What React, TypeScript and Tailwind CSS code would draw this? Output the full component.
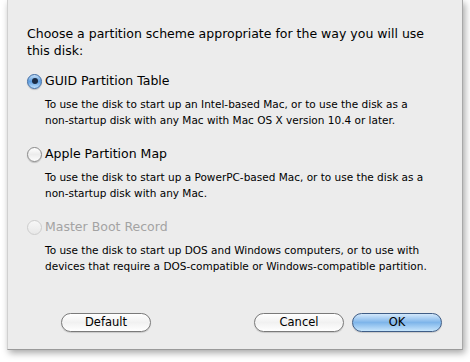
const FONT = { fontFamily: '"Lucida Grande", "DejaVu Sans", sans-serif' }

type Opt = {
  label: string
  desc: string[]
  state: 'on' | 'off' | 'disabled'
}

const OPTIONS: Opt[] = [
  {
    label: 'GUID Partition Table',
    desc: [
      'To use the disk to start up an Intel-based Mac, or to use the disk as a',
      'non-startup disk with any Mac with Mac OS X version 10.4 or later.',
    ],
    state: 'on',
  },
  {
    label: 'Apple Partition Map',
    desc: [
      'To use the disk to start up a PowerPC-based Mac, or to use the disk as a',
      'non-startup disk with any Mac.',
    ],
    state: 'off',
  },
  {
    label: 'Master Boot Record',
    desc: [
      'To use the disk to start up DOS and Windows computers, or to use with',
      'devices that require a DOS-compatible or Windows-compatible partition.',
    ],
    state: 'disabled',
  },
]

function Radio({ state }: { state: Opt['state'] }) {
  if (state === 'on') {
    return (
      <div className="w-[15px] h-[15px] shrink-0 rounded-full border border-[#3d6aa3] bg-gradient-to-b from-[#c4def6] via-[#5e9ee0] to-[#bfe0fb] flex items-center justify-center shadow-[0_1px_1px_rgba(0,0,0,0.2)]">
        <div className="w-[6px] h-[6px] rounded-full bg-[#1b2c45]" />
      </div>
    )
  }
  if (state === 'disabled') {
    return (
      <div className="w-[15px] h-[15px] shrink-0 rounded-full border border-[#cdcdcd] bg-gradient-to-b from-[#f7f7f7] to-[#e8e8e8]" />
    )
  }
  return (
    <div className="w-[15px] h-[15px] shrink-0 rounded-full border border-[#8a8a8a] bg-gradient-to-b from-[#ffffff] via-[#ececec] to-[#fdfdfd] shadow-[0_1px_1px_rgba(0,0,0,0.2)]" />
  )
}

function Button({ label, primary }: { label: string; primary?: boolean }) {
  return (
    <div
      className={`w-[90px] h-[19px] rounded-full border flex items-center justify-center text-[11.5px] text-black shadow-[0_1px_1px_rgba(0,0,0,0.15)] ${
        primary
          ? 'border-[#3f5d86] bg-gradient-to-b from-[#d3e8fb] via-[#7eb5ea] to-[#c6e5fc]'
          : 'border-[#7a7a7a] bg-gradient-to-b from-[#ffffff] via-[#f1f1f1] to-[#ffffff]'
      }`}
    >
      {label}
    </div>
  )
}

export default function App() {
  return (
    <div className="w-[470px] h-[362px] bg-white overflow-hidden" style={FONT}>
      <div className="ml-[7px] w-[456px] h-[350px] bg-[#ececec] border-l border-[#d0d0d0] border-r border-r-[#a8a8a8] border-b border-b-[#9a9a9a] shadow-[2px_3px_7px_rgba(0,0,0,0.35)] flex flex-col pl-[19px] pr-[18px] pt-[25px]">
        <p className="text-[12.5px] leading-[17px] text-black whitespace-nowrap">
          Choose a partition scheme appropriate for the way you will use
          <br />
          this disk:
        </p>

        <div className="flex flex-col gap-[17px] mt-[13px]">
          {OPTIONS.map((o) => (
            <div key={o.label} className="flex flex-col">
              <div className="flex items-center gap-[3px] h-[18px]">
                <Radio state={o.state} />
                <span
                  className={`text-[12.5px] ${
                    o.state === 'disabled' ? 'text-[#a3a3a3]' : 'text-black'
                  }`}
                >
                  {o.label}
                </span>
              </div>
              <div className="pl-[18px] mt-[6px] text-[10.5px] leading-[16px] text-black whitespace-nowrap">
                {o.desc.map((l) => (
                  <div key={l}>{l}</div>
                ))}
              </div>
            </div>
          ))}
        </div>

        <div className="flex items-center mt-auto mb-[17px] pl-[34px] pr-[2px]">
          <Button label="Default" />
          <div className="flex-1" />
          <div className="flex gap-[8px]">
            <Button label="Cancel" />
            <Button label="OK" primary />
          </div>
        </div>
      </div>
    </div>
  )
}
